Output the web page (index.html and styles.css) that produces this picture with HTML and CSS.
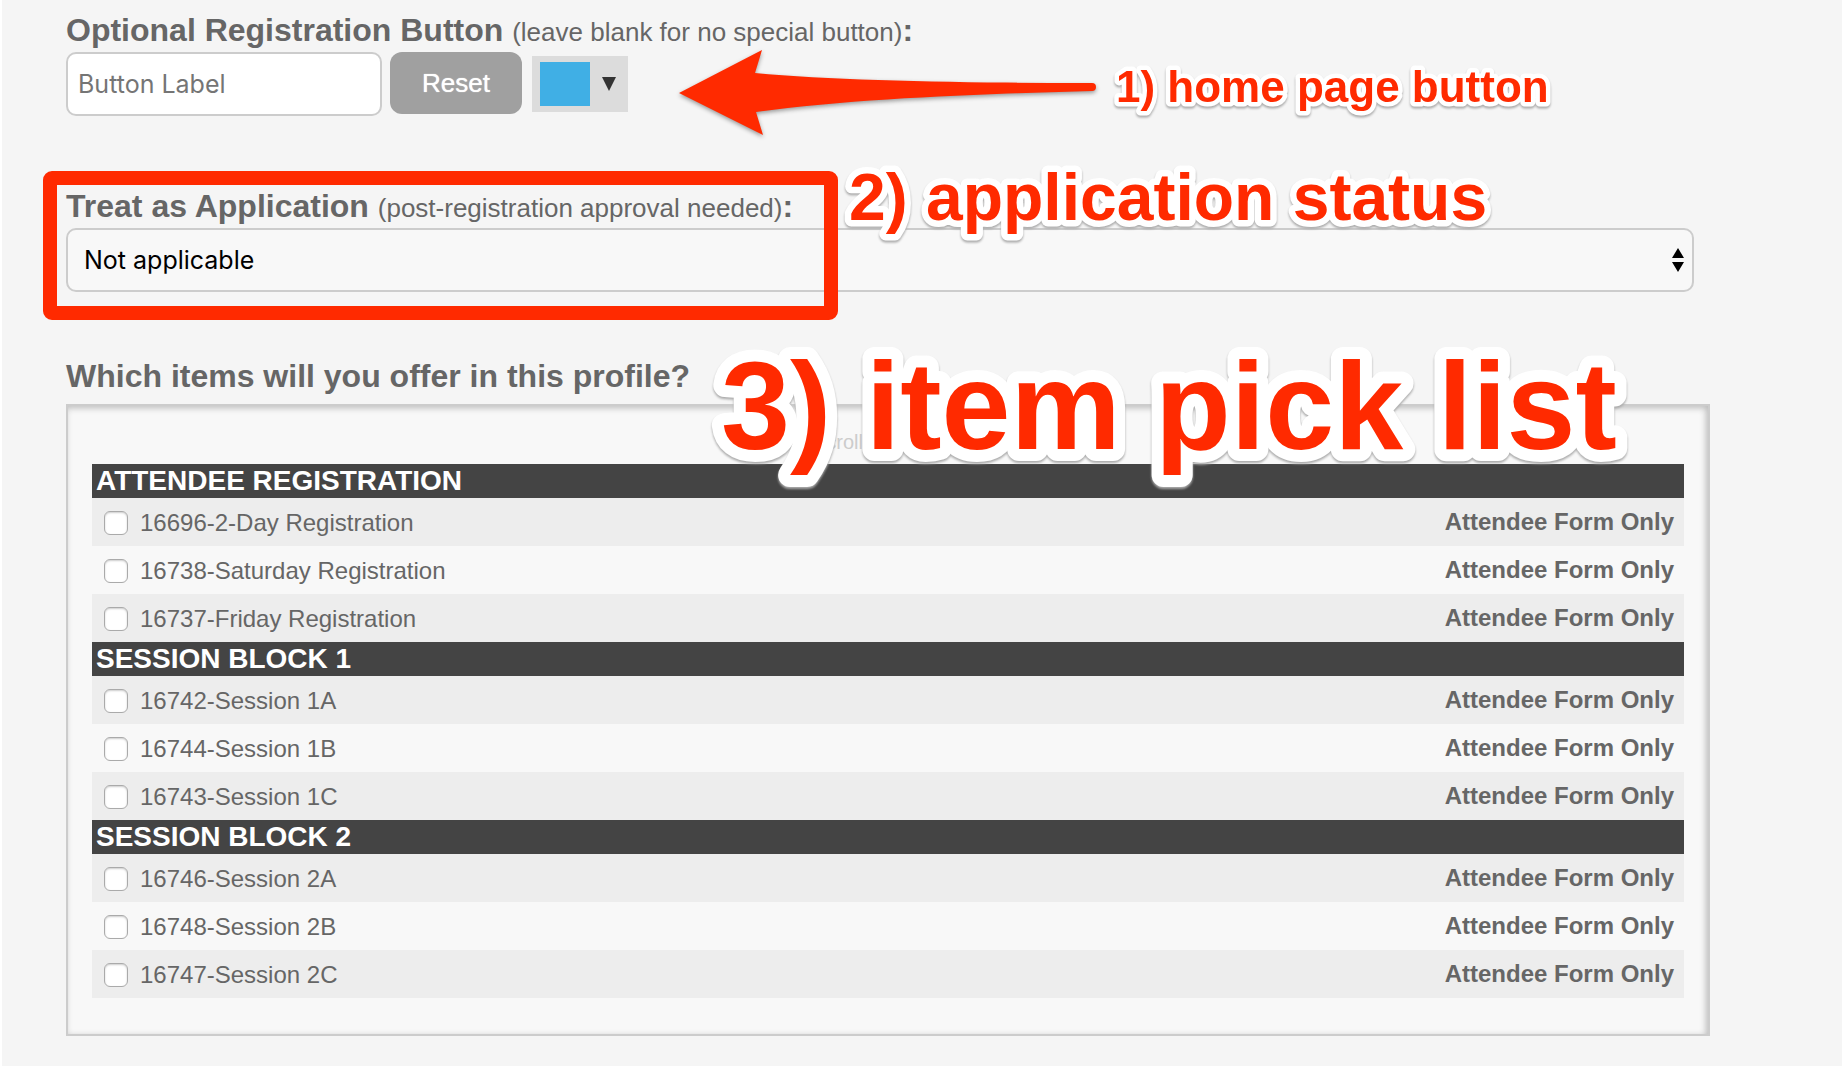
FILE: index.html
```html
<!DOCTYPE html>
<html lang="en">
<head>
  <meta charset="UTF-8">
  <meta name="viewport" content="width=device-width, initial-scale=1.0">
  <title>Registration Profile</title>
  <link rel="stylesheet" href="styles.css">
</head>
<body>
  <form class="profile">
    <div class="field">
      <label class="heading" for="txt-label">Optional Registration Button <small>(leave blank for no special button)</small>:</label>
      <div class="button-row">
        <input class="txt-label" id="txt-label" type="text" placeholder="Button Label">
        <button class="btn-reset" type="reset">Reset</button>
        <button class="btn-color" type="button" aria-label="Button color">
          <span class="swatch"></span>
          <svg width="14" height="14" viewBox="0 0 14 14"><path d="M0 0h14L7 14z" fill="#333"/></svg>
        </button>
      </div>
    </div>

    <div class="field">
      <label class="heading" for="sel-application">Treat as Application <small>(post-registration approval needed)</small>:</label>
      <div class="select-wrap">
        <select id="sel-application">
          <option>Not applicable</option>
        </select>
        <svg class="select-arrows" width="12" height="24" viewBox="0 0 12 24"><path d="M0 10L6 0l6 10zM0 14h12L6 24z"/></svg>
      </div>
    </div>

    <h2 class="heading">Which items will you offer in this profile?</h2>
    <div class="items">
      <p class="hint">scroll for more...</p>
      <table>
        <tbody>
          <tr><th colspan="2">ATTENDEE REGISTRATION</th></tr>
          <tr><td><input type="checkbox" id="item-16696"><label for="item-16696">16696-2-Day Registration</label></td><td class="form">Attendee Form Only</td></tr>
          <tr><td><input type="checkbox" id="item-16738"><label for="item-16738">16738-Saturday Registration</label></td><td class="form">Attendee Form Only</td></tr>
          <tr><td><input type="checkbox" id="item-16737"><label for="item-16737">16737-Friday Registration</label></td><td class="form">Attendee Form Only</td></tr>
        </tbody>
        <tbody>
          <tr><th colspan="2">SESSION BLOCK 1</th></tr>
          <tr><td><input type="checkbox" id="item-16742"><label for="item-16742">16742-Session 1A</label></td><td class="form">Attendee Form Only</td></tr>
          <tr><td><input type="checkbox" id="item-16744"><label for="item-16744">16744-Session 1B</label></td><td class="form">Attendee Form Only</td></tr>
          <tr><td><input type="checkbox" id="item-16743"><label for="item-16743">16743-Session 1C</label></td><td class="form">Attendee Form Only</td></tr>
        </tbody>
        <tbody>
          <tr><th colspan="2">SESSION BLOCK 2</th></tr>
          <tr><td><input type="checkbox" id="item-16746"><label for="item-16746">16746-Session 2A</label></td><td class="form">Attendee Form Only</td></tr>
          <tr><td><input type="checkbox" id="item-16748"><label for="item-16748">16748-Session 2B</label></td><td class="form">Attendee Form Only</td></tr>
          <tr><td><input type="checkbox" id="item-16747"><label for="item-16747">16747-Session 2C</label></td><td class="form">Attendee Form Only</td></tr>
        </tbody>
      </table>
    </div>
  </form>

  <!-- notes drawn over the form -->
  <svg class="notes" width="1700" height="520" viewBox="0 0 1700 520">
    <path class="arrow" d="M679 93L762 50L755 73C840 81 970 83 1092 83A4 4 0 0 1 1092 91C980 94 860 98 756 112L763 135Z"/>
    <rect class="frame" x="50" y="178" width="781" height="135" rx="2"/>
    <text class="note note-1" x="1116" y="102">1) home page button</text>
    <text class="note note-2" x="849" y="220">2) application status</text>
    <text class="note note-3" x="721" y="449">3) item pick list</text>
  </svg>
</body>
</html>
```

FILE: styles.css
```css
* {
  box-sizing: border-box;
}
body {
  margin: 0;
  border-left: 2px solid #fff;
  background-color: #f5f5f5;
  color: #666;
  font-family: "Liberation Sans", Arial, Helvetica, sans-serif;
  font-size: 24px;
}
.profile {
  padding: 10px 132px 30px 64px;
}
.field {
  margin: 0 16px 70px 0;
}
.field + .heading {
  margin-top: -6px;
}
.heading {
  display: block;
  margin: 0;
  font-size: 32px;
  font-weight: bold;
  line-height: 40px;
}
.heading small {
  font-size: 26px;
  font-weight: normal;
}
.button-row {
  display: flex;
  height: 64px;
}
.txt-label {
  width: 316px;
  margin-right: 8px;
  padding: 0 10px;
  border: 2px solid #ccc;
  border-radius: 10px;
  background-color: #fff;
  font-family: Inter, "Liberation Sans", sans-serif;
  font-size: 25px;
}
.txt-label::placeholder {
  color: #757575;
}
.btn-reset {
  width: 132px;
  height: 62px;
  margin-right: 10px;
  padding: 0;
  border: 0;
  border-radius: 12px;
  background-color: #a0a0a0;
  color: #fff;
  font-family: inherit;
  font-size: 26px;
  text-shadow: 0 0 1px #fff;
}
.btn-color {
  display: flex;
  align-items: center;
  gap: 12px;
  width: 96px;
  height: 56px;
  margin-top: 4px;
  padding: 0 8px;
  border: 0;
  background-color: #dcdcdc;
}
.swatch {
  width: 50px;
  height: 44px;
  background-color: #40afe5;
}
.select-wrap {
  position: relative;
}
select {
  display: block;
  width: 100%;
  height: 64px;
  padding: 0 16px;
  border: 2px solid #ccc;
  border-radius: 10px;
  background-color: #f8f8f8;
  color: #000;
  appearance: none;
  font-family: Inter, "Liberation Sans", sans-serif;
  font-size: 25px;
}
.select-arrows {
  position: absolute;
  top: 20px;
  right: 10px;
}
.items {
  margin-top: 8px;
  padding: 22px 24px 36px;
  border: 2px solid #ccc;
  background-color: #f8f8f8;
  box-shadow: inset -2px 2px 6px #bbb;
}
.hint {
  margin: 0 0 8px;
  color: #ccc;
  font-size: 20px;
  line-height: 28px;
  text-align: center;
}
table {
  width: 100%;
  border-collapse: collapse;
}
th {
  height: 34px;
  padding: 0 4px;
  background-color: #444;
  color: #fff;
  font-size: 28px;
  line-height: 34px;
  text-align: left;
}
td {
  height: 48px;
  padding: 0 10px 0 12px;
}
tr:nth-child(even) {
  background-color: #ededed;
}
td label {
  vertical-align: middle;
}
td input {
  width: 24px;
  height: 24px;
  margin: 0 12px 0 0;
  border: 1px solid #aaa;
  border-radius: 6px;
  background-color: #fff;
  box-shadow: inset 0 1px 2px #ccc;
  appearance: none;
  vertical-align: middle;
}
.form {
  font-weight: bold;
  text-align: right;
}
.notes {
  position: absolute;
  top: 0;
  left: 0;
  pointer-events: none;
}
.arrow {
  fill: #ff2a00;
  filter: drop-shadow(0 2px 2px #999);
}
.frame {
  fill: none;
  stroke: #ff2a00;
  stroke-width: 14px;
}
.note {
  fill: #ff2a00;
  stroke: #fff;
  stroke-linejoin: round;
  paint-order: stroke;
  font-weight: bold;
  filter: drop-shadow(0 2px 1px #aaa);
}
.note-1 {
  font-size: 44px;
  stroke-width: 9px;
}
.note-2 {
  font-size: 66px;
  stroke-width: 13px;
}
.note-3 {
  font-size: 124px;
  stroke-width: 24px;
}
```
